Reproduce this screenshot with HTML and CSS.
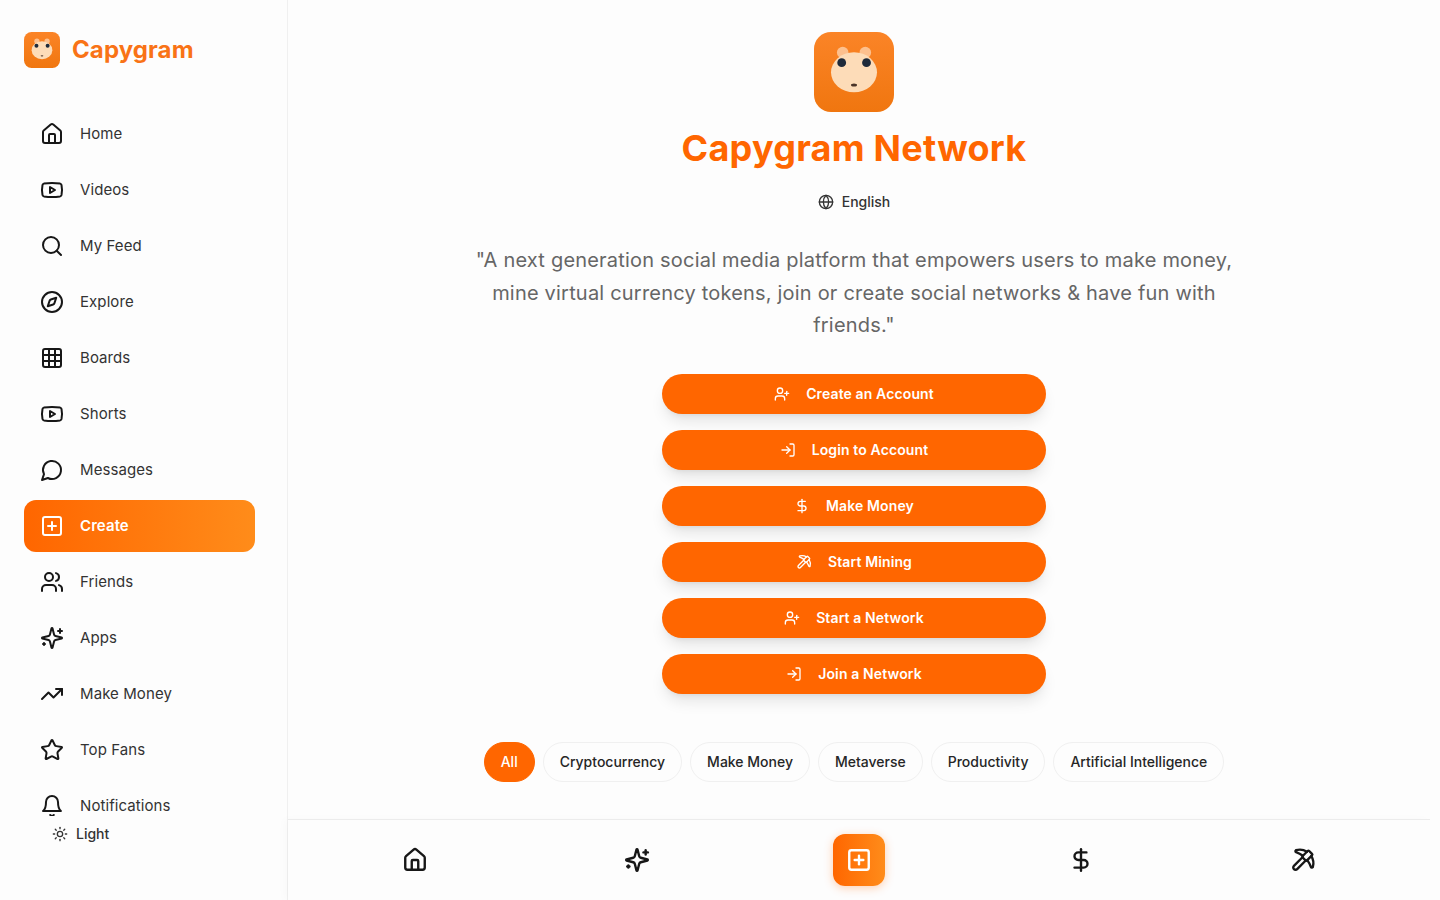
FILE: index.html
```html
<!DOCTYPE html>
<html lang="en">
<head>
<meta charset="UTF-8">
<meta name="viewport" content="width=device-width, initial-scale=1.0">
<title>Capygram Network</title>
<link rel="stylesheet" href="styles.css">
</head>
<body>

<!-- icon sprite -->
<svg class="sprite" xmlns="http://www.w3.org/2000/svg">
    <defs>
        <linearGradient id="logo-bg" x1="0" y1="0" x2="0" y2="1">
            <stop offset="0" stop-color="#fb8427"/>
            <stop offset="1" stop-color="#f0760f"/>
        </linearGradient>
    </defs>
    <symbol id="i-logo" viewBox="0 0 80 80">
        <rect width="80" height="80" rx="17" fill="url(#logo-bg)"/>
        <circle cx="28.7" cy="20.5" r="5.8" fill="#fdc08e"/>
        <circle cx="51.3" cy="20.5" r="5.8" fill="#fdc08e"/>
        <ellipse cx="40" cy="40.3" rx="23" ry="20" fill="#fddcb8"/>
        <circle cx="27.7" cy="30.7" r="4.4" fill="#1e2a3a"/>
        <circle cx="52.5" cy="30.7" r="4.4" fill="#1e2a3a"/>
        <ellipse cx="40" cy="53" rx="3" ry="1.5" fill="#4a3428"/>
    </symbol>
    <symbol id="i-home" viewBox="0 0 24 24"><path d="M15 21v-8a1 1 0 0 0-1-1h-4a1 1 0 0 0-1 1v8"/><path d="M3 10a2 2 0 0 1 .709-1.528l7-5.999a2 2 0 0 1 2.582 0l7 5.999A2 2 0 0 1 21 10v9a2 2 0 0 1-2 2H5a2 2 0 0 1-2-2z"/></symbol>
    <symbol id="i-video" viewBox="0 0 24 24"><path d="M2.5 17a24.12 24.12 0 0 1 0-10 2 2 0 0 1 1.4-1.4 49.56 49.56 0 0 1 16.2 0A2 2 0 0 1 21.5 7a24.12 24.12 0 0 1 0 10 2 2 0 0 1-1.4 1.4 49.55 49.55 0 0 1-16.2 0A2 2 0 0 1 2.5 17"/><path d="m10 15 5-3-5-3z"/></symbol>
    <symbol id="i-search" viewBox="0 0 24 24"><circle cx="11" cy="11" r="8"/><path d="m21 21-4.3-4.3"/></symbol>
    <symbol id="i-compass" viewBox="0 0 24 24"><path d="m16.24 7.76-1.804 5.411a2 2 0 0 1-1.265 1.265L7.76 16.24l1.804-5.411a2 2 0 0 1 1.265-1.265z"/><circle cx="12" cy="12" r="10"/></symbol>
    <symbol id="i-grid" viewBox="0 0 24 24"><rect width="18" height="18" x="3" y="3" rx="2"/><path d="M3 9h18"/><path d="M3 15h18"/><path d="M9 3v18"/><path d="M15 3v18"/></symbol>
    <symbol id="i-message" viewBox="0 0 24 24"><path d="M7.9 20A9 9 0 1 0 4 16.1L2 22Z"/></symbol>
    <symbol id="i-plus" viewBox="0 0 24 24"><rect width="18" height="18" x="3" y="3" rx="2"/><path d="M8 12h8"/><path d="M12 8v8"/></symbol>
    <symbol id="i-users" viewBox="0 0 24 24"><path d="M16 21v-2a4 4 0 0 0-4-4H6a4 4 0 0 0-4 4v2"/><circle cx="9" cy="7" r="4"/><path d="M22 21v-2a4 4 0 0 0-3-3.87"/><path d="M16 3.13a4 4 0 0 1 0 7.75"/></symbol>
    <symbol id="i-sparkles" viewBox="0 0 24 24"><path d="M9.937 15.5A2 2 0 0 0 8.5 14.063l-6.135-1.582a.5.5 0 0 1 0-.962L8.5 9.936A2 2 0 0 0 9.937 8.5l1.582-6.135a.5.5 0 0 1 .963 0L14.063 8.5A2 2 0 0 0 15.5 9.937l6.135 1.581a.5.5 0 0 1 0 .964L15.5 14.063a2 2 0 0 0-1.437 1.437l-1.582 6.135a.5.5 0 0 1-.963 0z"/><path d="M20 3v4"/><path d="M22 5h-4"/><path d="M4 17v2"/><path d="M5 18H3"/></symbol>
    <symbol id="i-trending" viewBox="0 0 24 24"><polyline points="22 7 13.5 15.5 8.5 10.5 2 17"/><polyline points="16 7 22 7 22 13"/></symbol>
    <symbol id="i-star" viewBox="0 0 24 24"><path d="M11.525 2.295a.53.53 0 0 1 .95 0l2.31 4.679a2.123 2.123 0 0 0 1.595 1.16l5.166.756a.53.53 0 0 1 .294.904l-3.736 3.638a2.123 2.123 0 0 0-.611 1.878l.882 5.14a.53.53 0 0 1-.771.56l-4.618-2.428a2.122 2.122 0 0 0-1.973 0L6.396 21.01a.53.53 0 0 1-.77-.56l.881-5.139a2.122 2.122 0 0 0-.611-1.879L2.16 9.795a.53.53 0 0 1 .294-.906l5.165-.755a2.122 2.122 0 0 0 1.597-1.16z"/></symbol>
    <symbol id="i-bell" viewBox="0 0 24 24"><path d="M6 8a6 6 0 0 1 12 0c0 7 3 9 3 9H3s3-2 3-9"/><path d="M10.3 21a1.94 1.94 0 0 0 3.4 0"/></symbol>
    <symbol id="i-sun" viewBox="0 0 24 24"><circle cx="12" cy="12" r="4"/><path d="M12 2v2"/><path d="M12 20v2"/><path d="m4.93 4.93 1.41 1.41"/><path d="m17.66 17.66 1.41 1.41"/><path d="M2 12h2"/><path d="M20 12h2"/><path d="m6.34 17.66-1.41 1.41"/><path d="m19.07 4.93-1.41 1.41"/></symbol>
    <symbol id="i-globe" viewBox="0 0 24 24"><circle cx="12" cy="12" r="10"/><path d="M12 2a14.5 14.5 0 0 0 0 20 14.5 14.5 0 0 0 0-20"/><path d="M2 12h20"/></symbol>
    <symbol id="i-user-plus" viewBox="0 0 24 24"><path d="M16 21v-2a4 4 0 0 0-4-4H6a4 4 0 0 0-4 4v2"/><circle cx="9" cy="7" r="4"/><path d="M19 8v6"/><path d="M22 11h-6"/></symbol>
    <symbol id="i-login" viewBox="0 0 24 24"><path d="M15 3h4a2 2 0 0 1 2 2v14a2 2 0 0 1-2 2h-4"/><polyline points="10 17 15 12 10 7"/><path d="M15 12H3"/></symbol>
    <symbol id="i-dollar" viewBox="0 0 24 24"><path d="M12 2v20"/><path d="M17 5H9.5a3.5 3.5 0 0 0 0 7h5a3.5 3.5 0 0 1 0 7H6"/></symbol>
    <symbol id="i-pickaxe" viewBox="0 0 24 24"><path d="M14.531 12.469 6.619 20.38a1 1 0 1 1-3-3l7.912-7.912"/><path d="M15.686 4.314A12.5 12.5 0 0 0 5.461 2.958 1 1 0 0 0 5.58 4.71a22 22 0 0 1 6.318 3.393"/><path d="M17.7 3.7a1 1 0 0 0-1.4 0l-4.6 4.6a1 1 0 0 0 0 1.4l2.6 2.6a1 1 0 0 0 1.4 0l4.6-4.6a1 1 0 0 0 0-1.4z"/><path d="M19.686 8.314a12.501 12.501 0 0 1 1.356 10.225 1 1 0 0 1-1.751-.119 22 22 0 0 0-3.393-6.319"/></symbol>
</svg>

<div class="app">

    <aside class="sidebar">
        <a class="brand" href="#">
            <svg class="brand-logo"><use href="#i-logo"/></svg>
            <span class="brand-name">Capygram</span>
        </a>

        <nav class="nav">
            <a class="nav-item" href="#"><svg class="icon"><use href="#i-home"/></svg>Home</a>
            <a class="nav-item" href="#"><svg class="icon"><use href="#i-video"/></svg>Videos</a>
            <a class="nav-item" href="#"><svg class="icon"><use href="#i-search"/></svg>My Feed</a>
            <a class="nav-item" href="#"><svg class="icon"><use href="#i-compass"/></svg>Explore</a>
            <a class="nav-item" href="#"><svg class="icon"><use href="#i-grid"/></svg>Boards</a>
            <a class="nav-item" href="#"><svg class="icon"><use href="#i-video"/></svg>Shorts</a>
            <a class="nav-item" href="#"><svg class="icon"><use href="#i-message"/></svg>Messages</a>
            <a class="nav-item active" href="#"><svg class="icon"><use href="#i-plus"/></svg>Create</a>
            <a class="nav-item" href="#"><svg class="icon"><use href="#i-users"/></svg>Friends</a>
            <a class="nav-item" href="#"><svg class="icon"><use href="#i-sparkles"/></svg>Apps</a>
            <a class="nav-item" href="#"><svg class="icon"><use href="#i-trending"/></svg>Make Money</a>
            <a class="nav-item" href="#"><svg class="icon"><use href="#i-star"/></svg>Top Fans</a>
            <a class="nav-item" href="#"><svg class="icon"><use href="#i-bell"/></svg>Notifications</a>
        </nav>

        <div class="sidebar-footer">
            <button class="theme-toggle"><svg class="icon-sm"><use href="#i-sun"/></svg>Light</button>
        </div>
    </aside>

    <main class="main">
        <div class="content">
            <svg class="hero-logo"><use href="#i-logo"/></svg>
            <h1 class="hero-title">Capygram Network</h1>
            <button class="lang"><svg class="icon-sm"><use href="#i-globe"/></svg>English</button>
            <p class="tagline">"A next generation social media platform that empowers users to make money, mine virtual currency tokens, join or create social networks &amp; have fun with friends."</p>

            <div class="actions">
                <a class="action" href="#"><svg class="icon-sm"><use href="#i-user-plus"/></svg>Create an Account</a>
                <a class="action" href="#"><svg class="icon-sm"><use href="#i-login"/></svg>Login to Account</a>
                <a class="action" href="#"><svg class="icon-sm"><use href="#i-dollar"/></svg>Make Money</a>
                <a class="action" href="#"><svg class="icon-sm"><use href="#i-pickaxe"/></svg>Start Mining</a>
                <a class="action" href="#"><svg class="icon-sm"><use href="#i-user-plus"/></svg>Start a Network</a>
                <a class="action" href="#"><svg class="icon-sm"><use href="#i-login"/></svg>Join a Network</a>
            </div>

            <div class="chips">
                <button class="chip active">All</button>
                <button class="chip">Cryptocurrency</button>
                <button class="chip">Make Money</button>
                <button class="chip">Metaverse</button>
                <button class="chip">Productivity</button>
                <button class="chip">Artificial Intelligence</button>
            </div>
        </div>

        <div class="bottom-bar">
            <a class="bottom-item" href="#"><svg class="icon-lg"><use href="#i-home"/></svg></a>
            <a class="bottom-item" href="#"><svg class="icon-lg"><use href="#i-sparkles"/></svg></a>
            <a class="bottom-item" href="#"><span class="bottom-create"><svg class="icon-lg"><use href="#i-plus"/></svg></span></a>
            <a class="bottom-item" href="#"><svg class="icon-lg"><use href="#i-dollar"/></svg></a>
            <a class="bottom-item" href="#"><svg class="icon-lg"><use href="#i-pickaxe"/></svg></a>
        </div>
    </main>

</div>

</body>
</html>
```

FILE: styles.css
```css
* {
    box-sizing: border-box;
}
html, body {
    height: 100%;
}
body {
    margin: 0;
    font-family: Inter, "Noto Sans", sans-serif;
    background-color: #fdfdfd;
    color: #262626;
    overflow: hidden;
}
a {
    color: inherit;
    text-decoration: none;
}
button {
    font-family: inherit;
    background: none;
    border: none;
    padding: 0;
    color: inherit;
}
.sprite {
    position: absolute;
    width: 0;
    height: 0;
}
.icon, .icon-sm, .icon-lg {
    fill: none;
    stroke: currentColor;
    stroke-width: 2;
    stroke-linecap: round;
    stroke-linejoin: round;
    flex-shrink: 0;
}
.icon {
    width: 24px;
    height: 24px;
    color: #171717;
}
.icon-sm {
    width: 16px;
    height: 16px;
}
.icon-lg {
    width: 26px;
    height: 26px;
    stroke-width: 2.2;
    color: #171717;
}

.app {
    display: flex;
    height: 900px;
}

/* sidebar */
.sidebar {
    width: 288px;
    flex-shrink: 0;
    display: flex;
    flex-direction: column;
    border-right: 1px solid #f0f0f0;
}
.brand {
    display: flex;
    align-items: flex-start;
    gap: 12px;
    padding: 32px 24px 0;
    height: 108px;
}
.brand-logo {
    width: 36px;
    height: 36px;
}
.brand-name {
    font-size: 24px;
    font-weight: 700;
    line-height: 36px;
    letter-spacing: 0.1px;
    color: #f97316;
}
.nav {
    flex: 1;
    min-height: 0;
    overflow: hidden;
    display: flex;
    flex-direction: column;
    gap: 4px;
    padding: 0 32px 0 24px;
}
.nav-item {
    display: flex;
    align-items: center;
    gap: 16px;
    height: 52px;
    flex-shrink: 0;
    padding: 0 16px;
    border-radius: 12px;
    font-size: 15px;
    line-height: 22px;
    letter-spacing: 0.08px;
    color: #333;
}
.nav-item.active {
    background: linear-gradient(90deg, #ff6600, #ff8c1a);
    color: #fff;
    font-weight: 600;
}
.nav-item.active .icon {
    color: #fff;
}
.sidebar-footer {
    height: 84px;
    flex-shrink: 0;
    padding: 2px 0 0 52px;
}
.theme-toggle {
    display: flex;
    align-items: center;
    gap: 8px;
    height: 32px;
    font-size: 14px;
    line-height: 20px;
    font-weight: 500;
    color: #333;
}

/* main */
.main {
    flex: 1;
    min-width: 0;
    display: flex;
    flex-direction: column;
}
.content {
    flex: 1;
    min-height: 0;
    overflow: hidden;
    display: flex;
    flex-direction: column;
    align-items: center;
    padding: 32px 20px 0 0;
}
.hero-logo {
    width: 80px;
    height: 80px;
    flex-shrink: 0;
}
.hero-title {
    margin: 16px 0 0;
    font-size: 36px;
    line-height: 40px;
    letter-spacing: 0.25px;
    font-weight: 700;
    color: #ff6600;
}
.lang {
    display: flex;
    align-items: center;
    gap: 8px;
    margin-top: 24px;
    height: 20px;
    font-size: 14px;
    line-height: 20px;
    font-weight: 500;
    color: #333;
}
.tagline {
    width: 768px;
    margin: 32px 0 0;
    font-size: 20px;
    line-height: 32.5px;
    letter-spacing: 0.2px;
    text-align: center;
    color: #666;
}
.actions {
    width: 384px;
    margin-top: 32px;
    display: flex;
    flex-direction: column;
    gap: 16px;
}
.action {
    display: flex;
    align-items: center;
    justify-content: center;
    gap: 16px;
    height: 40px;
    border-radius: 999px;
    background-color: #ff6600;
    color: #fff;
    font-size: 14px;
    letter-spacing: 0.12px;
    font-weight: 600;
    box-shadow: 0 10px 15px -3px rgba(0, 0, 0, 0.1), 0 4px 6px -4px rgba(0, 0, 0, 0.1);
}
.chips {
    margin-top: 48px;
    display: flex;
    gap: 8px;
}
.chip {
    height: 40px;
    padding: 0 16px;
    border: 1px solid #f0f0f0;
    border-radius: 999px;
    font-size: 14px;
    font-weight: 500;
    color: #262626;
}
.chip.active {
    background-color: #ff6600;
    border-color: #ff6600;
    color: #fff;
}

/* bottom bar */
.bottom-bar {
    height: 81px;
    flex-shrink: 0;
    margin-right: 10px;
    padding: 0 16px;
    display: flex;
    align-items: center;
    border-top: 1px solid #ececec;
    background-color: #fdfdfd;
    box-shadow: -4px 0 8px rgba(0, 0, 0, 0.02);
}
.bottom-item {
    flex: 1;
    display: flex;
    align-items: center;
    justify-content: center;
}
.bottom-create {
    width: 52px;
    height: 52px;
    border-radius: 12px;
    display: flex;
    align-items: center;
    justify-content: center;
    background: linear-gradient(90deg, #ff6600, #ff8c1a);
    box-shadow: 0 2px 10px rgba(255, 102, 0, 0.3);
}
.bottom-create .icon-lg {
    color: #fff;
}
```
